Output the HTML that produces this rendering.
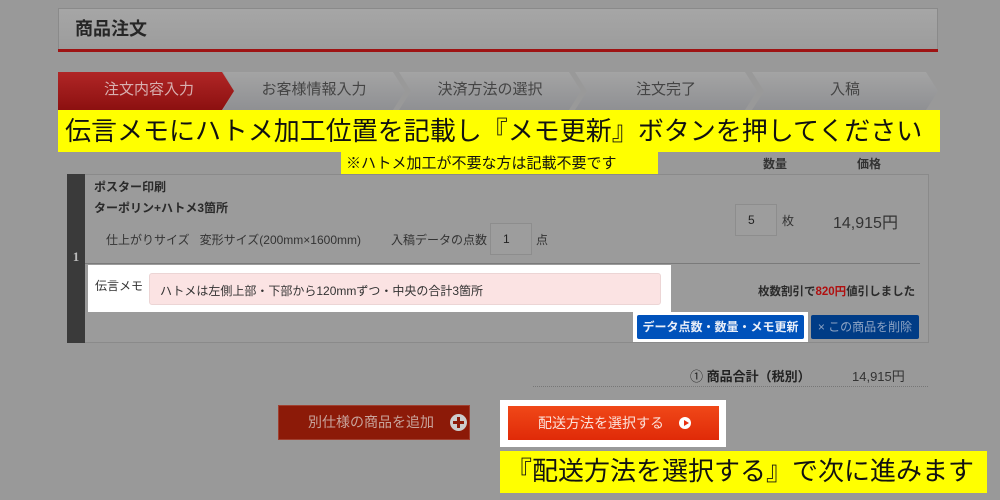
<html><head><style>
body{margin:0;width:1000px;height:500px;background:#999;position:relative;overflow:hidden;font-family:"Liberation Sans","Noto Sans CJK JP",sans-serif}
div,span{position:absolute;box-sizing:border-box}
.st{top:72px;height:38px;width:182px;clip-path:polygon(0 0,170px 0,182px 19px,170px 38px,0 38px,12px 19px);background:linear-gradient(#a4a4a4,#8f9093);color:#444;font-size:15px;text-align:center;line-height:36px}
.y{background:#ffff00;color:#111;white-space:nowrap}
</style></head><body>
<div style="left:58px;top:8px;width:880px;height:42px;background:linear-gradient(#a6a6a6,#9c9c9c);border:1px solid #8a8a8a;border-bottom:none"></div>
<div style="left:58px;top:49px;width:880px;height:3px;background:#9e1414"></div>
<div style="left:75px;top:15px;font-size:18px;font-weight:bold;color:#262626;line-height:28px">商品注文</div>
<div class="st" style="left:58px;clip-path:polygon(0 0,164px 0,176px 19px,164px 38px,0 38px);background:linear-gradient(#b02626,#8c1010);color:#d8b0b0">注文内容入力</div>
<div class="st" style="left:223px">お客様情報入力</div>
<div class="st" style="left:399px">決済方法の選択</div>
<div class="st" style="left:575px">注文完了</div>
<div class="st" style="left:752px;width:186px;clip-path:polygon(0 0,174px 0,186px 19px,174px 38px,0 38px,12px 19px)">入稿</div>
<div class="y" style="left:58px;top:110px;width:882px;height:42px;font-size:26px;line-height:42px;padding-left:7px">伝言メモにハトメ加工位置を記載し『メモ更新』ボタンを押してください</div>
<div class="y" style="left:341px;top:152px;width:317px;height:24px;font-size:15px;line-height:24px;padding-left:5px">※ハトメ加工が不要な方は記載不要です</div>
<div style="left:763px;top:155px;font-size:12px;font-weight:bold;color:#333">数量</div>
<div style="left:857px;top:155px;font-size:12px;font-weight:bold;color:#333">価格</div>
<div style="left:67px;top:174px;width:862px;height:169px;border:1px solid #8a8a8a;background:#9b9b9b"></div>
<div style="left:67px;top:174px;width:18px;height:169px;background:#3a3a3a;color:#bbb;font-size:13px;font-weight:bold;text-align:center;padding-top:75px;font-family:'Liberation Serif',serif">1</div>
<div style="left:94px;top:178px;font-size:12px;font-weight:bold;color:#2a2a2a">ポスター印刷</div>
<div style="left:94px;top:199px;font-size:12px;font-weight:bold;color:#2a2a2a">ターポリン+ハトメ3箇所</div>
<div style="left:106px;top:231px;font-size:12px;color:#333;white-space:nowrap">仕上がりサイズ&nbsp;&nbsp; 変形サイズ(200mm×1600mm)</div>
<div style="left:391px;top:231px;font-size:12px;color:#333;white-space:nowrap">入稿データの点数</div>
<div style="left:490px;top:223px;width:42px;height:32px;border:1px solid #8d8d8d;background:#9d9d9d;font-size:12px;padding:8px 0 0 12px;color:#222">1</div>
<div style="left:536px;top:231px;font-size:12px;color:#333">点</div>
<div style="left:735px;top:204px;width:42px;height:32px;border:1px solid #8d8d8d;background:#9d9d9d;font-size:12px;padding:8px 0 0 12px;color:#222">5</div>
<div style="left:782px;top:212px;font-size:12px;color:#333">枚</div>
<div style="left:833px;top:209px;font-size:16px;color:#333">14,915円</div>
<div style="left:85px;top:263px;width:835px;height:1px;background:#7a7a7a"></div>
<div style="left:88px;top:265px;width:583px;height:47px;background:#fff"></div>
<div style="left:95px;top:277px;font-size:12px;color:#333">伝言メモ</div>
<div style="left:149px;top:273px;width:512px;height:32px;background:#fbe3e3;border:1px solid #ecd5d5;border-radius:3px;font-size:12px;color:#333;padding:8px 0 0 10px">ハトメは左側上部・下部から120mmずつ・中央の合計3箇所</div>
<div style="left:758px;top:283px;font-size:11.5px;font-weight:bold;color:#2a2a2a;white-space:nowrap">枚数割引で<span style="position:static;color:#b01010">820円</span>値引しました</div>
<div style="left:633px;top:312px;width:175px;height:30px;background:#fff"></div>
<div style="left:637px;top:315px;width:167px;height:24px;background:#0052bb;border-radius:2px;color:#e8eef8;font-size:12px;text-align:center;line-height:24px;font-weight:bold">データ点数・数量・メモ更新</div>
<div style="left:811px;top:315px;width:108px;height:24px;background:#003c86;border-radius:2px;color:#8ea4c4;font-size:12px;text-align:center;line-height:24px">× この商品を削除</div>
<div style="left:690px;top:366px;font-size:13px;font-weight:bold;color:#222;white-space:nowrap"><span style="position:static;font-weight:normal">①</span> 商品合計（税別）</div>
<div style="left:852px;top:366px;font-size:13px;color:#333">14,915円</div>
<div style="left:533px;top:386px;width:395px;border-top:1px dotted #777"></div>
<div style="left:278px;top:405px;width:192px;height:35px;background:#8c1a08;border:1px solid #a04030;color:#c8a49c;font-size:14px;line-height:33px;padding-left:29px;white-space:nowrap">別仕様の商品を追加<span style="left:171px;top:8px;width:17px;height:17px;border-radius:50%;background:#ccc;"></span><span style="left:178px;top:11px;width:3px;height:11px;background:#8c1a08"></span><span style="left:174px;top:15px;width:11px;height:3px;background:#8c1a08"></span></div>
<div style="left:500px;top:400px;width:226px;height:47px;background:#fff"></div>
<div style="left:508px;top:406px;width:211px;height:34px;background:linear-gradient(#f04818,#e02a08);color:#fbe0d8;font-size:14px;line-height:34px;padding-left:30px;white-space:nowrap">配送方法を選択する<span style="left:171px;top:11px;width:12px;height:12px;border-radius:50%;background:#fff"></span><span style="left:176px;top:14px;width:0;height:0;border-left:5px solid #e83010;border-top:3px solid transparent;border-bottom:3px solid transparent"></span></div>
<div class="y" style="left:500px;top:451px;width:487px;height:42px;font-size:26px;line-height:40px;padding-left:6px">『配送方法を選択する』で次に進みます</div>
</body></html>
